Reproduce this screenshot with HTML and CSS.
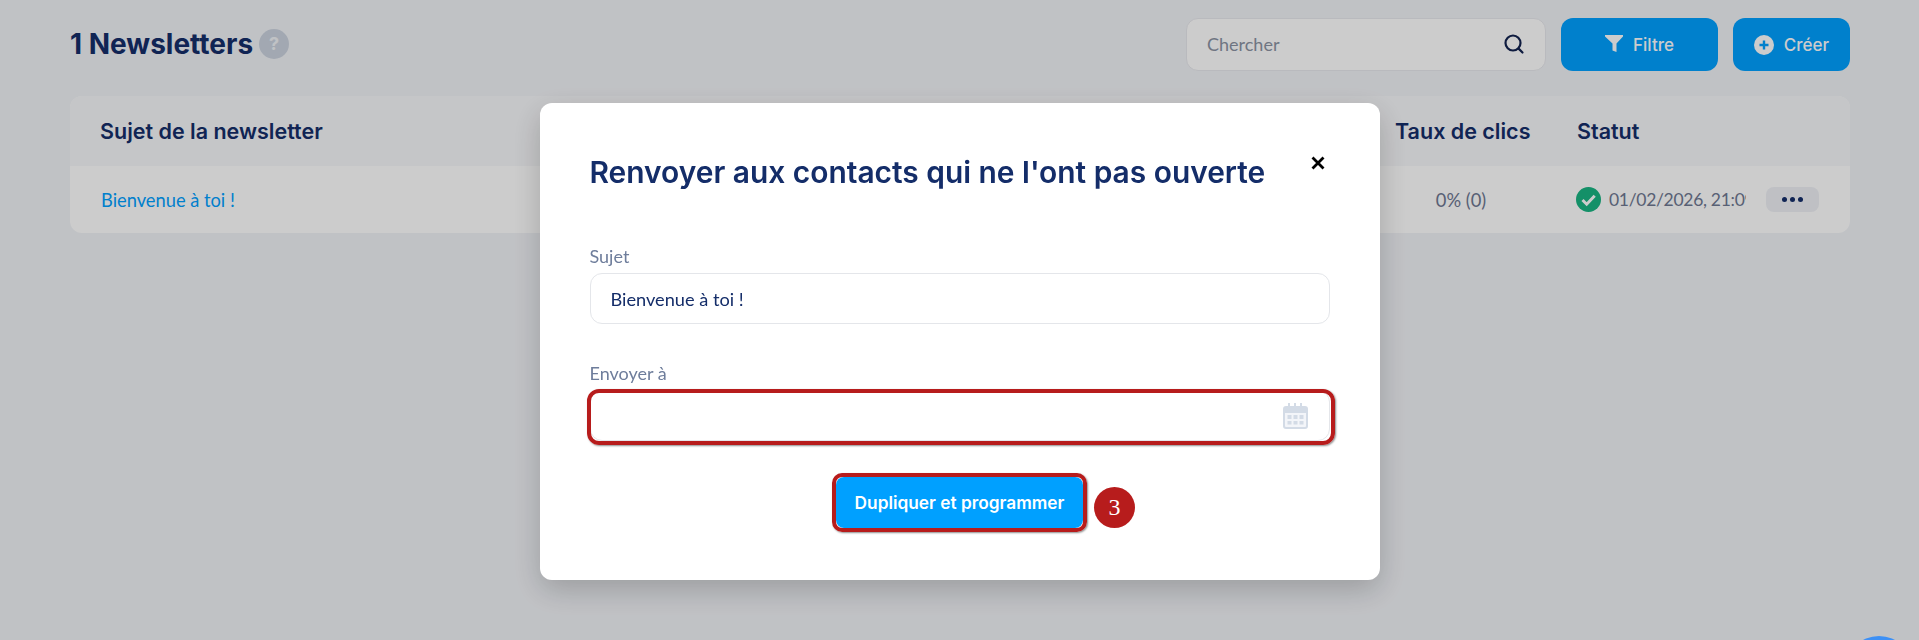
FILE: index.html
```html
<!DOCTYPE HTML>
<html lang="fr">
<head>
    <title>Newsletters</title>
    <link rel="stylesheet" href="styles.css">
</head>
<body>
    <div class="page">
        <div class="topbar">
            <div class="page-title">
                <h1>1 Newsletters</h1>
                <span class="help">?</span>
            </div>
            <div class="actions">
                <div class="search">
                    <span>Chercher</span>
                    <svg width="22" height="22" viewBox="0 0 22 22" fill="none" stroke="#12224f" stroke-width="2.2" stroke-linecap="round">
                        <circle cx="10" cy="10" r="7.5"/>
                        <path d="M15.6 15.6L19.5 19.5"/>
                    </svg>
                </div>
                <button class="btn btn-filter">
                    <svg width="18" height="19" viewBox="0 0 18 19" fill="#fff"><path d="M0 0h18v1.500l-6.500 7V17l-4-1.500V8.500L0 1.500z"/></svg>
                    Filtre
                </button>
                <button class="btn btn-create">
                    <svg width="20" height="20" viewBox="0 0 20 20"><circle cx="10" cy="10" r="10" fill="#fff"/><path d="M10 5.500v9M5.500 10h9" stroke="#00a0ff" stroke-width="2.400"/></svg>
                    Créer
                </button>
            </div>
        </div>

        <div class="table">
            <div class="table-head">
                <div class="col-subject">Sujet de la newsletter</div>
                <div class="col-clicks">Taux de clics</div>
                <div class="col-status">Statut</div>
            </div>
            <div class="table-row">
                <div class="col-subject"><a href="#">Bienvenue à toi !</a></div>
                <div class="col-clicks clicks-value">0% (0)</div>
                <div class="col-status status-cell">
                    <svg width="25" height="25" viewBox="0 0 25 25"><circle cx="12.500" cy="12.500" r="12.500" fill="#19b482"/><path d="M6.500 13l4.200 4.200 8-8.400" fill="none" stroke="#fff" stroke-width="3"/></svg>
                    <span class="status-date">01/02/2026, 21:09</span>
                </div>
                <button class="more"><i></i><i></i><i></i></button>
            </div>
        </div>
    </div>

    <div class="overlay">
        <div class="modal">
            <div class="modal-head">
                <h2>Renvoyer aux contacts qui ne l'ont pas ouverte</h2>
                <svg class="close" width="14" height="14" viewBox="0 0 14 14" stroke="#000" stroke-width="2.800"><path d="M1.500 1.500l11 11M12.500 1.500l-11 11"/></svg>
            </div>
            <div class="field">
                <label>Sujet</label>
                <div class="input">Bienvenue à toi !</div>
            </div>
            <div class="field">
                <label>Envoyer à</label>
                <div class="input date-input">
                    <svg width="25" height="26" viewBox="0 0 25 26">
                        <path fill="#d3dbe6" d="M5 0h2v3h4V0h2v3h4V0h2v3h3a3 3 0 0 1 3 3v17a3 3 0 0 1-3 3H3a3 3 0 0 1-3-3V6a3 3 0 0 1 3-3h2z"/>
                        <path fill="#f3f5f9" d="M2 10h21v13a1 1 0 0 1-1 1H3a1 1 0 0 1-1-1z"/>
                        <path fill="#d3dbe6" d="M4.500 12h4v4h-4zM10.500 12h4v4h-4zM16.500 12h4v4h-4zM4.500 18h4v3.500h-4zM10.500 18h4v3.500h-4zM16.500 18h4v3.500h-4z"/>
                    </svg>
                    <span class="mark mark-input"></span>
                </div>
            </div>
            <div class="modal-foot">
                <div class="submit-wrap">
                    <button class="submit">Dupliquer et programmer</button>
                    <span class="mark mark-submit"></span>
                    <span class="step">3</span>
                </div>
            </div>
        </div>
    </div>

    <div class="chat-clip"><div class="chat-bubble"></div></div>
</body>
</html>
```

FILE: styles.css
```css
* {
    box-sizing: border-box;
}
html, body {
    height: 640px;
    overflow: hidden;
}
body {
    margin: 0;
    background-color: #f1f3f7;
    font-family: Inter, "Liberation Sans", sans-serif;
    color: #142d69;
}
button {
    font-family: inherit;
    border: none;
    cursor: pointer;
}
.page {
    padding: 18px 69px 0 70px;
}
.topbar {
    display: flex;
    justify-content: space-between;
    align-items: center;
    height: 53px;
    margin-bottom: 25px;
}
.page-title {
    display: flex;
    align-items: center;
    gap: 6px;
}
h1 {
    margin: -2px 0 0;
    font-size: 28px;
    font-weight: 700;
}
.help {
    width: 30px;
    height: 30px;
    margin-top: -2px;
    border-radius: 50%;
    background-color: #cbd3df;
    color: #f1f3f7;
    font-size: 18px;
    font-weight: 700;
    display: flex;
    align-items: center;
    justify-content: center;
}
.actions {
    display: flex;
    gap: 15px;
}
.search {
    width: 360px;
    height: 53px;
    padding: 0 20px 2px;
    background-color: #fff;
    border: 1px solid #e8e9ee;
    border-radius: 12px;
    display: flex;
    align-items: center;
    justify-content: space-between;
    font-family: Lato, sans-serif;
    font-size: 18px;
    color: #8b93a3;
}
.btn {
    height: 53px;
    border-radius: 12px;
    background-color: #00a0ff;
    color: #fff;
    font-size: 17px;
    font-weight: 500;
    display: flex;
    align-items: center;
    justify-content: center;
    gap: 10px;
}
.btn-filter {
    width: 157px;
}
.btn-create {
    width: 117px;
}
.table {
    border-radius: 12px;
    overflow: hidden;
    background-color: #fff;
}
.table-head,
.table-row {
    display: flex;
    align-items: center;
    padding-left: 30px;
}
.table-head {
    height: 70px;
    background-color: #f7f8fa;
    font-size: 21.500px;
    font-weight: 600;
}
.table-row {
    height: 67px;
    font-family: Lato, sans-serif;
    font-size: 18.300px;
}
.col-subject {
    width: 1295px;
}
.col-clicks {
    width: 182px;
}
.col-status {
    width: 170px;
}
.col-subject a {
    margin-left: 1px;
    color: #00a0ff;
    text-decoration: none;
}
.clicks-value {
    text-align: center;
    padding-right: 50px;
    color: #6e7892;
}
.status-cell {
    display: flex;
    align-items: center;
    gap: 8px;
    margin-left: -1px;
    color: #6e7892;
    overflow: hidden;
    white-space: nowrap;
}
.status-cell svg {
    flex: none;
}
.status-date {
    font-size: 17.500px;
    letter-spacing: -0.3px;
}
.more {
    width: 53px;
    height: 25px;
    margin-left: 20px;
    border-radius: 8px;
    background-color: #eff1f6;
    display: flex;
    align-items: center;
    justify-content: center;
    gap: 3px;
}
.more i {
    width: 5px;
    height: 5px;
    border-radius: 50%;
    background-color: #142d69;
}
.overlay {
    position: fixed;
    inset: 0;
    background-color: rgba(0, 0, 0, 0.2);
    display: flex;
    justify-content: center;
    align-items: flex-start;
    padding-top: 103px;
}
.modal {
    width: 840px;
    height: 477px;
    background-color: #fff;
    border-radius: 12px;
    padding: 50px 50px 0;
    box-shadow: 0 10px 30px rgba(0, 0, 0, 0.2);
}
.modal-head {
    display: flex;
    justify-content: space-between;
    align-items: flex-start;
    height: 92px;
}
h2 {
    margin: 0;
    font-size: 29.900px;
    font-weight: 600;
    line-height: 38px;
}
.close {
    margin: 3px 5px 0 0;
}
.field {
    margin-bottom: 38px;
}
.field label {
    display: block;
    font-family: Lato, sans-serif;
    font-size: 18px;
    line-height: 22px;
    margin-bottom: 6px;
    color: #6e7d9b;
}
.input {
    position: relative;
    height: 51px;
    border: 1px solid #e4e6ea;
    border-radius: 12px;
    padding: 0 20px;
    display: flex;
    align-items: center;
    font-family: Lato, sans-serif;
    font-size: 18.200px;
}
.date-input {
    justify-content: flex-end;
    padding-right: 21px;
}
/* red highlight boxes drawn over the screenshot */
.mark {
    position: absolute;
    border: 4px solid #b71c1c;
    box-shadow: 1px 1px 2px rgba(0, 0, 0, 0.45);
    pointer-events: none;
}
.mark-input {
    left: -4px;
    right: -6px;
    top: -2px;
    bottom: -5px;
    border-radius: 12px;
}
.mark-submit {
    inset: -4px;
    border-radius: 10px;
}
.modal-foot {
    display: flex;
    justify-content: center;
    margin-top: -2px;
}
.submit-wrap {
    position: relative;
    display: flex;
}
.submit {
    width: 247px;
    height: 51px;
    border-radius: 8px;
    background-color: #00a0ff;
    color: #fff;
    font-size: 17.300px;
    font-weight: 600;
}
.step {
    position: absolute;
    left: 258px;
    top: 10px;
    width: 41px;
    height: 41px;
    border-radius: 50%;
    background-color: #b71c1c;
    color: #fff;
    font-family: "Liberation Serif", serif;
    font-size: 24px;
    display: flex;
    align-items: center;
    justify-content: center;
}
.chat-clip {
    position: fixed;
    left: 1845px;
    top: 636px;
    width: 68px;
    height: 4px;
    overflow: hidden;
}
.chat-bubble {
    width: 68px;
    height: 68px;
    border-radius: 50%;
    background-color: #3d90f5;
}
```
